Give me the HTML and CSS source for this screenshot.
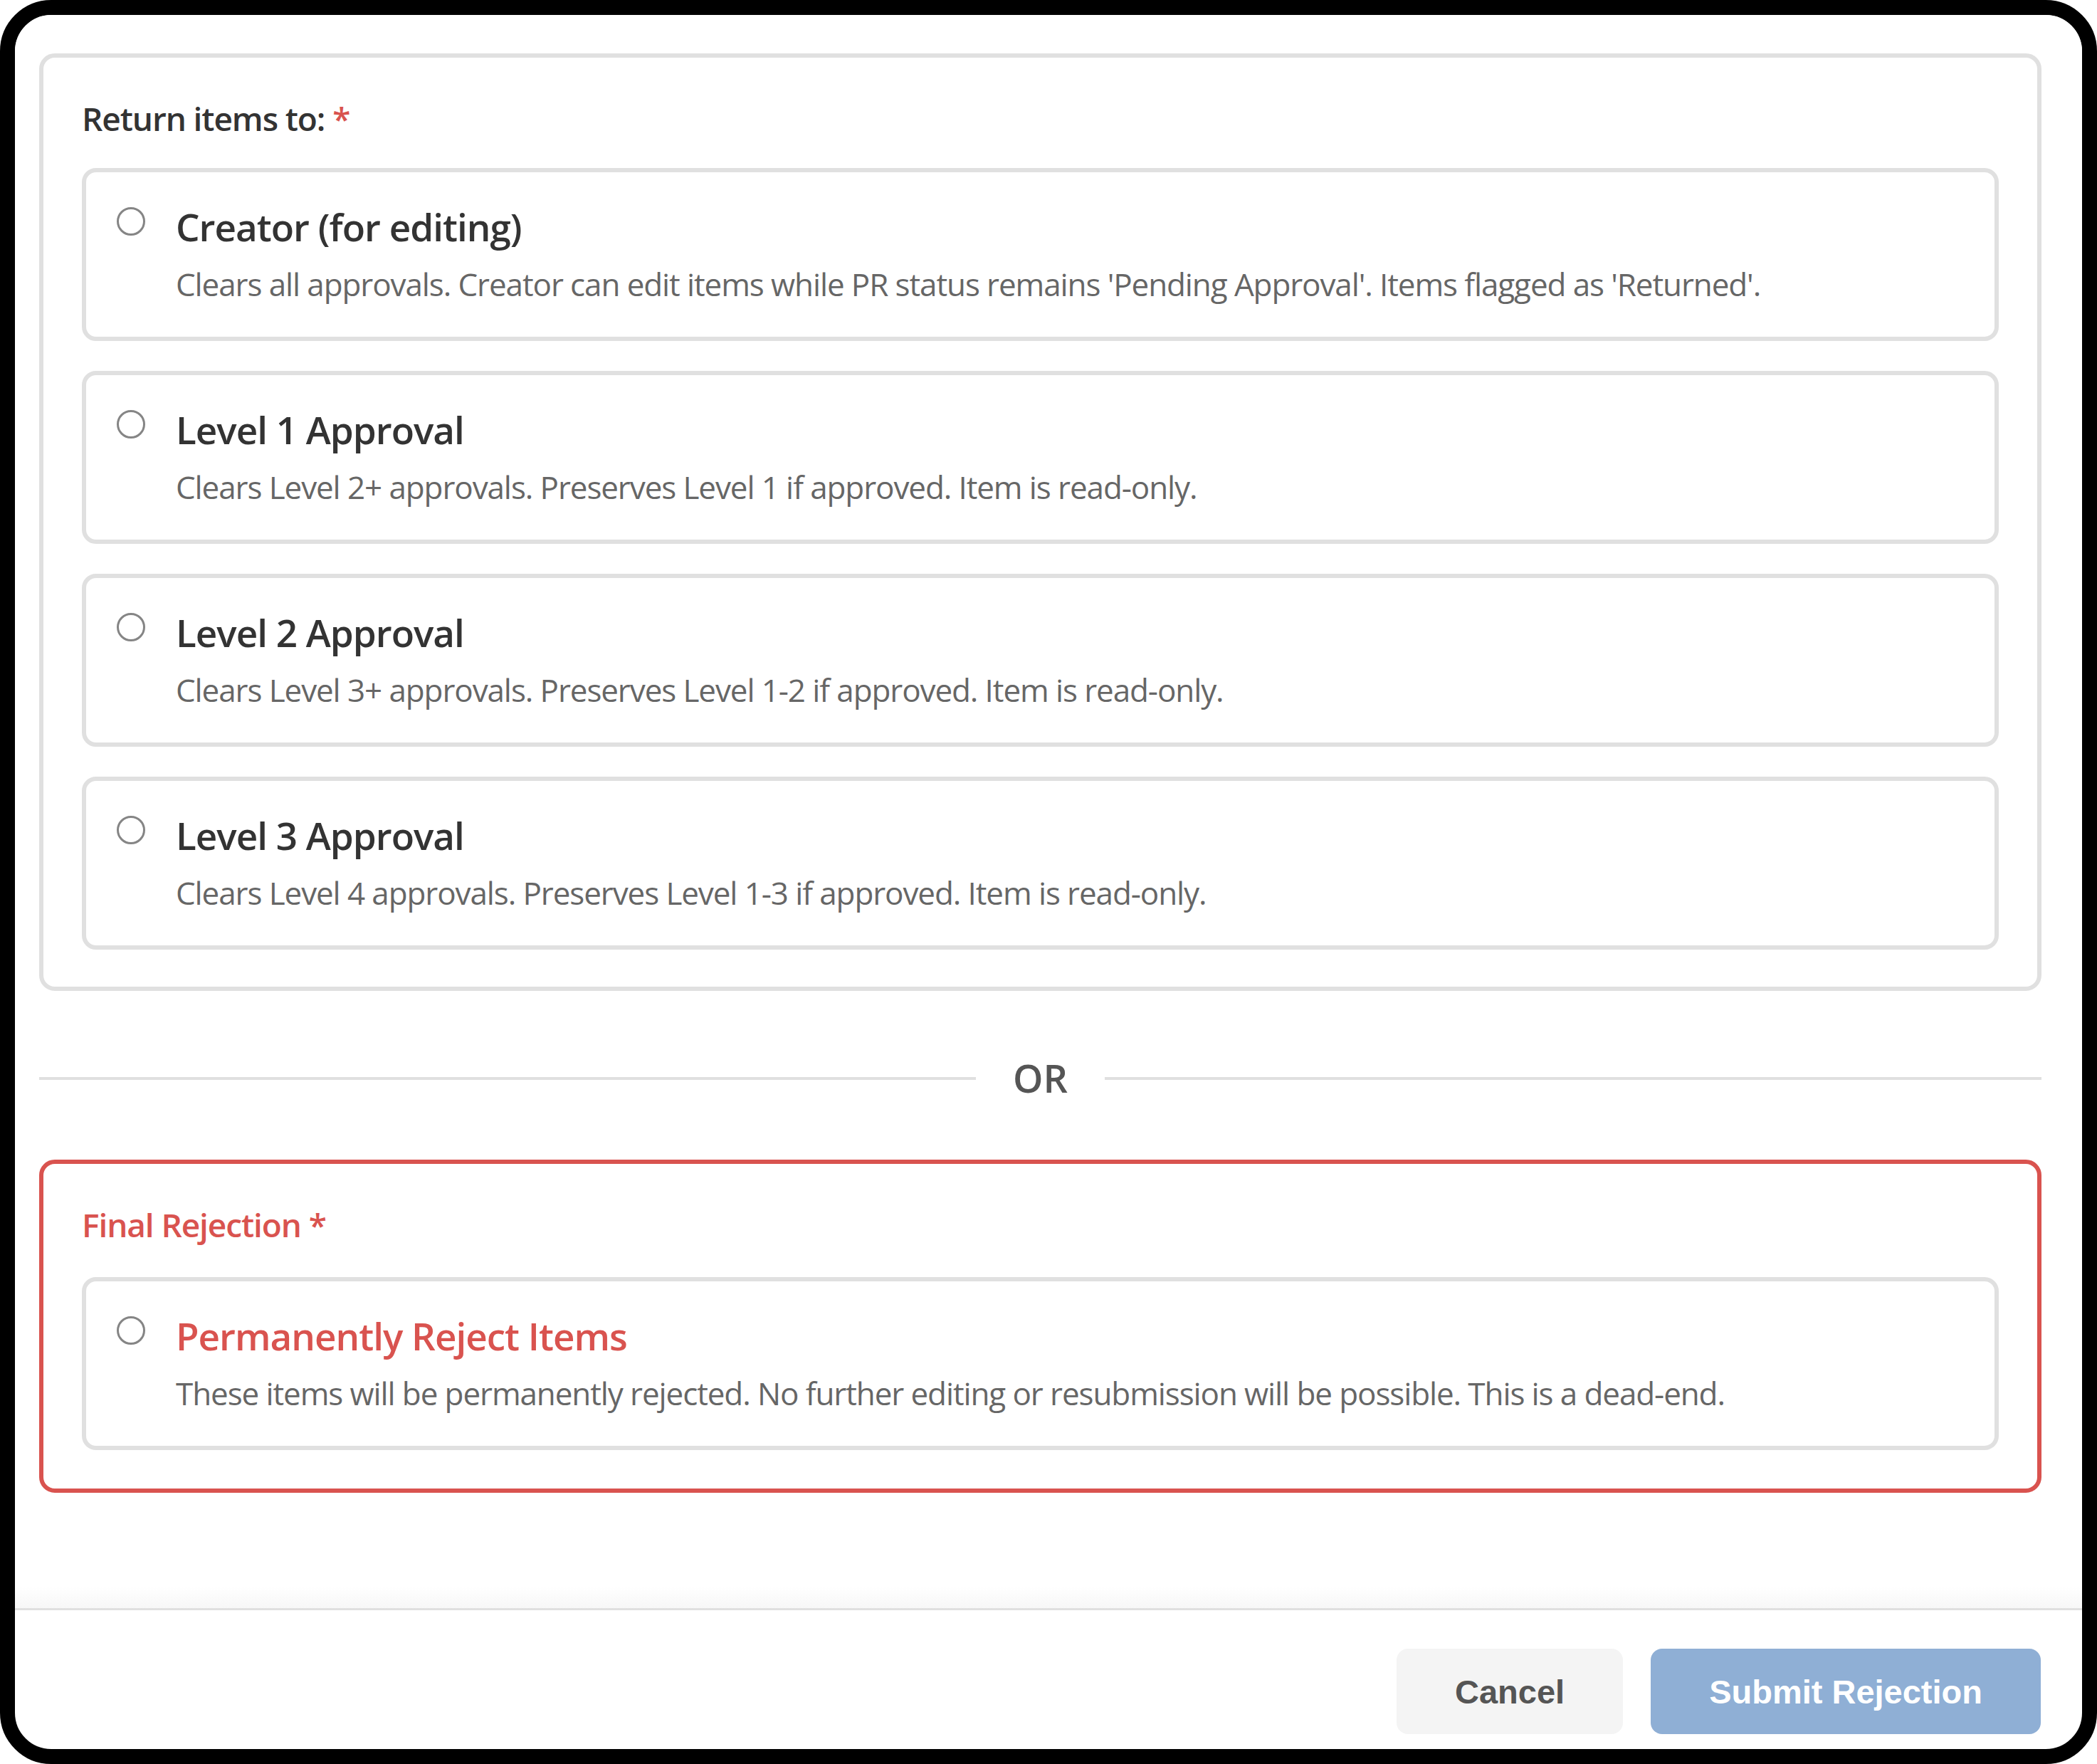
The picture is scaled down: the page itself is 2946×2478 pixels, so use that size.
FILE: index.html
```html
<!DOCTYPE html>
<html lang="en">
<head>
  <meta charset="UTF-8">
  <title>Reject Items</title>
  <link rel="stylesheet" href="styles.css">
</head>
<body>

  <div class="frame">
    <div class="modal-body">

      <div class="section">
        <div class="section-label">Return items to: <span class="req">*</span></div>

        <div class="options">
          <label class="option">
            <input type="radio" name="action" value="creator">
            <div class="option-text">
              <div class="option-title">Creator (for editing)</div>
              <div class="option-desc">Clears all approvals. Creator can edit items while PR status remains 'Pending Approval'. Items flagged as 'Returned'.</div>
            </div>
          </label>

          <label class="option">
            <input type="radio" name="action" value="level1">
            <div class="option-text">
              <div class="option-title">Level 1 Approval</div>
              <div class="option-desc">Clears Level 2+ approvals. Preserves Level 1 if approved. Item is read-only.</div>
            </div>
          </label>

          <label class="option">
            <input type="radio" name="action" value="level2">
            <div class="option-text">
              <div class="option-title">Level 2 Approval</div>
              <div class="option-desc">Clears Level 3+ approvals. Preserves Level 1-2 if approved. Item is read-only.</div>
            </div>
          </label>

          <label class="option">
            <input type="radio" name="action" value="level3">
            <div class="option-text">
              <div class="option-title">Level 3 Approval</div>
              <div class="option-desc">Clears Level 4 approvals. Preserves Level 1-3 if approved. Item is read-only.</div>
            </div>
          </label>
        </div>
      </div>

      <div class="divider"><span>OR</span></div>

      <div class="section section-danger">
        <div class="section-label">Final Rejection *</div>

        <label class="option">
          <input type="radio" name="action" value="reject">
          <div class="option-text">
            <div class="option-title">Permanently Reject Items</div>
            <div class="option-desc">These items will be permanently rejected. No further editing or resubmission will be possible. This is a dead-end.</div>
          </div>
        </label>
      </div>

    </div>

    <div class="modal-footer">
      <button class="btn btn-cancel">Cancel</button>
      <button class="btn btn-submit" disabled>Submit Rejection</button>
    </div>
  </div>

</body>
</html>
```

FILE: styles.css
```css
* {
  box-sizing: border-box;
}
html, body {
  margin: 0;
  height: 100%;
  background-color: #fff;
}
body {
  font-family: "Open Sans", "Noto Sans", Arial, sans-serif;
  color: #333;
}

.frame {
  height: 100vh;
  display: flex;
  flex-direction: column;
  border: 21px solid #000;
  border-radius: 72px;
  background-color: #fff;
  overflow: hidden;
}

.modal-body {
  flex: 1;
  padding: 54px 57px 0 34px;
  background: linear-gradient(to bottom, #fff calc(100% - 30px), #f7f7f7);
}

.section {
  border: 6px solid #e0e0e0;
  border-radius: 22px;
  padding: 54px 54px 52px;
}
.section-label {
  font-size: 46px;
  line-height: 62px;
  font-weight: 600;
  letter-spacing: -1.1px;
  margin-bottom: 39px;
}
.req {
  color: #d9534f;
}

.options {
  display: flex;
  flex-direction: column;
  gap: 42px;
}
.option {
  display: flex;
  align-items: flex-start;
  gap: 43px;
  border: 6px solid #e0e0e0;
  border-radius: 20px;
  padding: 41px 40px 44px 43px;
  cursor: pointer;
}
.option input[type="radio"] {
  appearance: none;
  flex-shrink: 0;
  width: 40px;
  height: 40px;
  margin: 8px 0 0;
  border: 3px solid #858585;
  border-radius: 50%;
  background-color: #fff;
}
.option-title {
  font-size: 53px;
  line-height: 72px;
  font-weight: 600;
  letter-spacing: -1px;
  color: #333;
}
.option-desc {
  margin-top: 14px;
  font-size: 44px;
  line-height: 60px;
  letter-spacing: -1.1px;
  color: #666;
}

.divider {
  display: flex;
  align-items: center;
  margin: 84px 0 76px;
  height: 77px;
}
.divider::before,
.divider::after {
  content: "";
  flex: 1;
  height: 4px;
  background-color: #e0e0e0;
}
.divider span {
  padding: 0 52px;
  font-size: 54px;
  line-height: 77px;
  font-weight: 600;
  color: #555;
}

.section-danger {
  border-color: #d9534f;
  padding-bottom: 54px;
}
.section-danger .section-label {
  margin-bottom: 43px;
}
.section-danger .section-label,
.section-danger .option-title {
  color: #d9534f;
}

.modal-footer {
  display: flex;
  justify-content: flex-end;
  gap: 39px;
  border-top: 3px solid #e0e0e0;
  padding: 54px 58px 21px 0;
}
.btn {
  height: 120px;
  padding: 0 82px;
  border: none;
  border-radius: 16px;
  font-family: "Liberation Sans", Arial, sans-serif;
  font-size: 47px;
  font-weight: bold;
}
.btn-cancel {
  background-color: #f4f4f4;
  color: #555;
}
.btn-submit {
  background-color: #8fafd5;
  color: #fff;
}
```
